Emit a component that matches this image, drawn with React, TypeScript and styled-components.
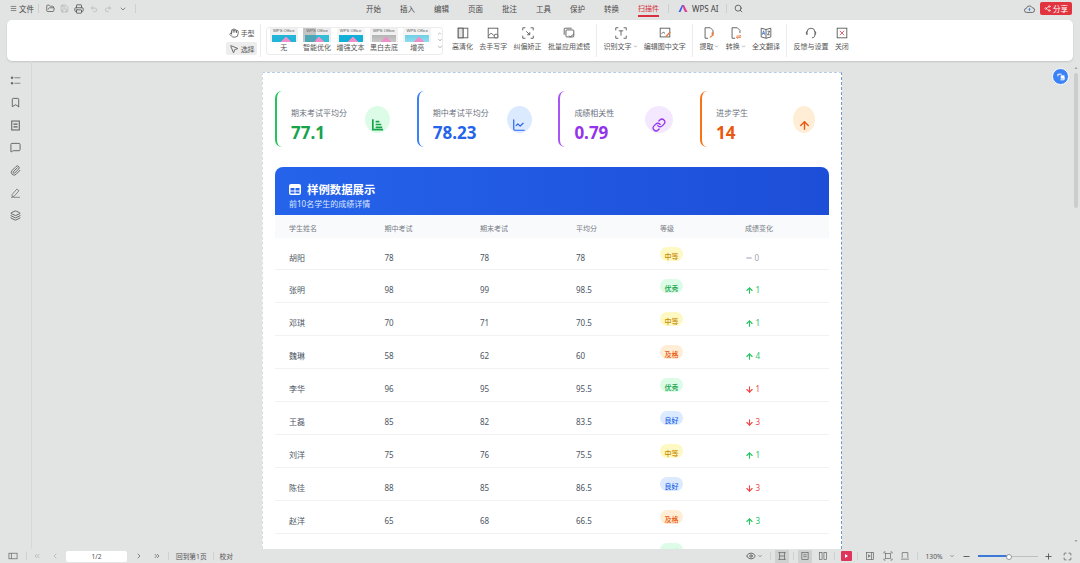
import { FC, ReactNode } from 'react'
import styled, { createGlobalStyle } from 'styled-components'
import {
    ArrowDown, ArrowUp, Bookmark, ChartLine, ChevronDown, ChevronLeft, ChevronRight, ChevronsLeft,
    ChevronsRight, Eye, FolderOpen, Hand, Layers, Link, Maximize, Menu, MessageSquare, Minus,
    MousePointer2, Paperclip, Plus, Printer, Redo2, Save, Search, Share2, Undo2,
} from 'lucide-react'

const GlobalStyle = createGlobalStyle`
    html, body { margin: 0; padding: 0; height: 100%; overflow: hidden; }
    body { font-family: "Noto Sans", "Noto Sans CJK SC", sans-serif; background: #e2e3e3; color: #4b4b4b; }
    #root { height: 100%; }
`

const Shell = styled.div`
    width: 1080px;
    height: 563px;
    display: flex;
    flex-direction: column;
    position: relative;
    overflow: hidden;
    background: #e2e3e3;
`

/* top bar */
const TopBar = styled.div`
    height: 20px;
    flex: none;
    box-sizing: border-box;
    padding-bottom: 3px;
    display: flex;
    align-items: center;
    font-size: 7.5px;
    color: #444;
    svg { display: block; }
`
const QuickGroup = styled.div`
    width: 366px;
    flex: none;
    display: flex;
    align-items: center;
    padding-left: 10px;
    box-sizing: border-box;
`
const FileLabel = styled.span`
    margin-left: 2px;
`
const QuickBtn = styled.span<{ $muted?: boolean }>`
    width: 14.5px;
    display: flex;
    justify-content: center;
    color: ${p => (p.$muted ? '#b4b4b4' : '#555')};
`
const TopSep = styled.i<{ $gap?: number }>`
    width: 1px;
    height: 9px;
    background: #cfcfcf;
    margin: 0 ${p => p.$gap ?? 5}px;
`
const Nav = styled.nav`
    display: flex;
    align-items: center;
    gap: 19px;
`
const NavItem = styled.span<{ $active?: boolean }>`
    position: relative;
    line-height: 12px;
    font-size: ${p => (p.$active ? '7px' : '7.5px')};
    color: ${p => (p.$active ? '#d8303c' : '#4a4a4a')};
    &::after {
        content: '';
        display: ${p => (p.$active ? 'block' : 'none')};
        position: absolute;
        left: 0;
        right: 0;
        bottom: -2px;
        height: 1.5px;
        background: #d8303c;
    }
`
const AiLabel = styled.span`
    display: flex;
    align-items: center;
    gap: 4px;
    font-size: 8px;
`
const TopRight = styled.div`
    margin-left: auto;
    display: flex;
    align-items: center;
    gap: 5px;
    padding-right: 8px;
    color: #555;
`
const ShareBtn = styled.button`
    width: 32px;
    height: 13px;
    border: 0;
    border-radius: 2px;
    background: #e2343f;
    color: #fff;
    padding: 0;
    font: inherit;
    font-size: 7.5px;
    display: flex;
    align-items: center;
    justify-content: center;
    gap: 2px;
`

/* ribbon */
const Ribbon = styled.div`
    height: 41px;
    flex: none;
    margin: 0 7px;
    padding-right: 5px;
    background: #fff;
    border-radius: 5px;
    box-shadow: 0 1px 2px rgba(0, 0, 0, 0.14);
    display: flex;
    align-items: center;
    justify-content: center;
    gap: 6.3px;
    font-size: 7px;
    color: #555;
`
const ToolStack = styled.div`
    display: flex;
    flex-direction: column;
    gap: 3px;
    margin-right: -3px;
`
const ToolBtn = styled.div<{ $active?: boolean }>`
    width: 31px;
    height: 13px;
    border-radius: 2px;
    display: flex;
    align-items: center;
    justify-content: center;
    gap: 2px;
    background: ${p => (p.$active ? '#ededed' : 'transparent')};
`
const RibbonSep = styled.i`
    width: 1px;
    height: 33px;
    background: #ececec;
    flex: none;
`
const FilterBox = styled.div`
    width: 177px;
    height: 28px;
    box-sizing: border-box;
    margin: 0 3px 0 -2px;
    padding: 0 0 0 3px;
    border: 1px solid #ececec;
    border-radius: 3px;
    display: flex;
    align-items: center;
    gap: 5.4px;
`
const Filter = styled.div`
    width: 28px;
    flex: none;
    text-align: center;
    white-space: nowrap;
    line-height: 10px;
    display: flex;
    flex-direction: column;
    align-items: center;
    gap: 1px;
`
const Thumb = styled.div<{ $band: string; $head: string; $shade?: boolean }>`
    width: 28px;
    height: 14px;
    position: relative;
    overflow: hidden;
    background: ${p => p.$head};
    font-size: 4.2px;
    line-height: 6px;
    color: #555;
    font-family: "Liberation Sans", sans-serif;
    &::before {
        content: '';
        position: absolute;
        left: 2px;
        right: 2px;
        bottom: 0;
        height: 7px;
        background:
            linear-gradient(to bottom right, transparent 50%, #ee8fc9 50%) 8px 100% / 6px 5px no-repeat,
            linear-gradient(to bottom left, transparent 50%, #ee8fc9 50%) 14px 100% / 6px 5px no-repeat,
            ${p => p.$band};
    }
    &::after {
        content: '';
        display: ${p => (p.$shade ? 'block' : 'none')};
        position: absolute;
        left: 0;
        top: 0;
        bottom: 0;
        width: 13px;
        background: rgba(120, 125, 125, 0.35);
    }
`
const FilterScroll = styled.div`
    margin-left: auto;
    width: 10px;
    display: flex;
    flex-direction: column;
    align-items: center;
    gap: 1px;
    color: #666;
`
const RibbonItem = styled.div`
    flex: none;
    display: flex;
    flex-direction: column;
    align-items: center;
    gap: 2.5px;
    white-space: nowrap;
    line-height: 9px;
    padding-bottom: 4px;
    svg { display: block; }
`
const Label = styled.span`
    display: flex;
    align-items: center;
    gap: 1px;
`

/* main */
const Main = styled.div`
    flex: 1;
    min-height: 0;
    display: flex;
`
const Sidebar = styled.aside`
    width: 31px;
    flex: none;
    border-right: 1px solid #d7d8d8;
    display: flex;
    flex-direction: column;
    align-items: center;
    padding: 13.5px 0 0;
    gap: 11.5px;
    color: #5f5f5f;
    box-sizing: content-box;
`
const Canvas = styled.main`
    flex: 1;
    min-width: 0;
    overflow: hidden;
    display: flex;
    justify-content: center;
    padding-top: 11px;
    position: relative;
`
const ScrollRail = styled.div`
    width: 8px;
    flex: none;
    display: flex;
    flex-direction: column;
    align-items: center;
    padding-top: 5px;
    color: #666;
`
const ScrollThumb = styled.div`
    width: 4px;
    height: 135px;
    margin-top: 3px;
    border-radius: 2px;
    background: #cbcccc;
`
const ScrollEnd = styled.div`
    margin-top: auto;
    padding-bottom: 1px;
`
const FloatBtn = styled.button`
    position: absolute;
    top: 7px;
    right: 3px;
    width: 17px;
    height: 17px;
    padding: 0;
    border: 1px solid #fff;
    border-radius: 50%;
    background: #3b82f6;
    color: #fff;
    display: flex;
    align-items: center;
    justify-content: center;
`
const Page = styled.section`
    width: 580px;
    flex: none;
    box-sizing: border-box;
    background: #fff;
    padding: 18px 12px 0 12px;
    border-top: 1px dashed #b6cbe8;
    border-right: 1px dashed #6f97cc;
    border-left: 1px dashed #d9dde2;
`

/* stat cards */
const Stats = styled.div`
    display: grid;
    grid-template-columns: repeat(4, 129px);
    gap: 12.7px;
`
const Stat = styled.div<{ $color: string }>`
    height: 56px;
    box-sizing: border-box;
    border-left: 2px solid ${p => p.$color};
    border-radius: 7px;
    padding: 0 14px 0 14px;
    display: flex;
    align-items: center;
    justify-content: space-between;
`
const StatText = styled.div`
    margin-top: 13px;
`
const StatLabel = styled.div`
    font-size: 8px;
    line-height: 12px;
    margin-bottom: 3px;
    color: #6b7280;
`
const StatValue = styled.div<{ $color: string }>`
    font-size: 17px;
    font-weight: 700;
    line-height: 22px;
    color: ${p => p.$color};
`
const StatIcon = styled.div<{ $bg: string; $color: string; $w: number }>`
    width: ${p => p.$w}px;
    height: 27px;
    border-radius: 50%;
    background: ${p => p.$bg};
    color: ${p => p.$color};
    display: flex;
    align-items: flex-end;
    justify-content: center;
    padding-bottom: 1px;
    box-sizing: border-box;
`

/* table */
const TablePanel = styled.div`
    margin-top: 20px;
`
const TableHead = styled.header`
    height: 48px;
    box-sizing: border-box;
    padding: 15px 14px 0;
    border-radius: 8px 8px 0 0;
    background: linear-gradient(90deg, #2563eb, #1d4ed8);
    color: #fff;
`
const TableTitle = styled.div`
    display: flex;
    align-items: center;
    gap: 6px;
    font-size: 11.4px;
    font-weight: 700;
    line-height: 15px;
`
const TableSub = styled.div`
    font-size: 8px;
    line-height: 11px;
    margin-top: 1px;
    color: #dbe6ff;
`
const Row = styled.div<{ $head?: boolean }>`
    display: grid;
    grid-template-columns: 95.5px 95.5px 96px 84px 85px 1fr;
    padding-left: 14px;
    padding-top: ${p => (p.$head ? '2px' : '0')};
    align-items: center;
    height: ${p => (p.$head ? '23px' : '33px')};
    box-sizing: border-box;
    font-size: ${p => (p.$head ? '7px' : '8px')};
    color: ${p => (p.$head ? '#777d87' : '#4b5563')};
    background: ${p => (p.$head ? '#f9fafb' : '#fff')};
    border-bottom: ${p => (p.$head ? '0' : '1px solid #f1f2f4')};
`
const FirstRow = styled(Row)`
    height: 32px;
`
const Cell = styled.div`
    padding-top: 7px;
`
const Badge = styled.span<{ $bg: string; $color: string }>`
    width: 23px;
    height: 14px;
    border-radius: 7px;
    background: ${p => p.$bg};
    color: ${p => p.$color};
    font-size: 7px;
    font-weight: 500;
    line-height: 8px;
    display: flex;
    align-items: flex-end;
    justify-content: center;
    box-sizing: border-box;
`
const Change = styled.div<{ $color: string }>`
    display: flex;
    align-items: center;
    gap: 1.5px;
    padding-top: 7px;
    font-size: 8px;
    color: ${p => p.$color};
    svg { margin-top: 2px; }
`

/* status bar */
const StatusBar = styled.footer`
    height: 14px;
    flex: none;
    display: flex;
    align-items: center;
    position: relative;
    z-index: 2;
    font-size: 6.7px;
    color: #555;
    background: #e2e3e3;
    padding-left: 8px;
    padding-right: 8px;
    svg { display: block; }
`
const StatusBtn = styled.span<{ $w?: number; $on?: boolean; $muted?: boolean }>`
    width: ${p => p.$w ?? 14}px;
    height: 13px;
    flex: none;
    display: flex;
    align-items: center;
    justify-content: center;
    background: ${p => (p.$on ? '#cfd0d0' : 'transparent')};
    border-radius: 1px;
    color: ${p => (p.$muted ? '#aaa' : '#555')};
`
const StatusSep = styled.i<{ $l?: number; $r?: number }>`
    width: 1px;
    height: 8px;
    flex: none;
    background: #cfd0d0;
    margin: 0 ${p => p.$r ?? 6}px 0 ${p => p.$l ?? 6}px;
`
const PageInput = styled.div`
    width: 61px;
    height: 11px;
    flex: none;
    background: #fff;
    border-radius: 2px;
    text-align: center;
    line-height: 11px;
    margin-right: 4px;
`
const StatusRight = styled.div`
    margin-left: auto;
    display: flex;
    align-items: center;
`
const EyeCaret = styled.span`
    margin: 0 0 0 1px;
    color: #555;
`
const ZoomText = styled.span`
    margin: 0 5px 0 0;
    width: 18px;
    white-space: nowrap;
`
const ZoomCaret = styled.span`
    margin-right: 7.5px;
`
const FullScreen = styled.span`
    margin-left: 10px;
`
const PlayBtn = styled.span`
    width: 11px;
    height: 10px;
    flex: none;
    border-radius: 1px;
    background: #e0355a;
    display: flex;
    align-items: center;
    justify-content: center;
    &::before {
        content: '';
        border-left: 3px solid #fff;
        border-top: 2px solid transparent;
        border-bottom: 2px solid transparent;
    }
`
const Slider = styled.div`
    width: 60px;
    height: 1px;
    flex: none;
    background: #bdbebe;
    position: relative;
    margin: 0 6.5px;
`
const SliderFill = styled.div`
    position: absolute;
    left: 0;
    top: -0.5px;
    height: 1.5px;
    width: 30px;
    background: #3b78d8;
`
const SliderKnob = styled.div`
    position: absolute;
    left: 28px;
    top: -2px;
    width: 4px;
    height: 4px;
    border-radius: 50%;
    background: #fff;
    border: 0.5px solid #999;
`

const Glyph: FC<{ size?: number; children: ReactNode }> = ({ size = 14, children }) => (
    <svg width={size} height={size} viewBox="0 0 16 16" fill="none" stroke="currentColor" strokeWidth="1">
        {children}
    </svg>
)

const ORANGE = '#e8743b'

const WpsMark = () => (
    <svg width="10" height="9" viewBox="0 0 10 9">
        <path d="M0.5 8 L4 1 L5.5 1 L2.5 8 Z" fill="#3b5bea" />
        <path d="M4.5 1 L6 1 L9.5 8 L7 8 L5.5 5 Z" fill="#e23f8e" />
    </svg>
)

const ribbonGroupA = [
    {
        label: '高清化',
        icon: <Glyph><rect x="2.5" y="2.5" width="11" height="11" /><path d="M8 2.5v11" /><rect x="2.5" y="2.5" width="5.5" height="11" fill="#e4e4e4" /></Glyph>,
    },
    {
        label: '去手写字',
        icon: <Glyph><rect x="2.5" y="2.5" width="11" height="11" /><path d="M3 11l3-3 3 3" /><circle cx="11.5" cy="11.5" r="2.2" fill="#fff" /></Glyph>,
    },
    {
        label: '纠偏矫正',
        icon: <Glyph><path d="M2 5V2h3M11 2h3v3M14 11v3h-3M5 14H2v-3" /><path d="M6 6l4 4M10 7v3H7" /></Glyph>,
    },
    {
        label: '批量应用滤镜',
        icon: <Glyph><rect x="4.5" y="4.5" width="9" height="8" rx="1" /><path d="M2.5 10V3.5a1 1 0 0 1 1-1H11M8 11l1.5 1.5 4-3.5" /></Glyph>,
    },
]

const ribbonGroupB = [
    {
        label: <Label>识别文字 <ChevronDown size={5} strokeWidth={2} /></Label>,
        icon: <Glyph><path d="M2 5V2h3M11 2h3v3M14 11v3h-3M5 14H2v-3" /><path d="M5.5 5.5h5M8 5.5v5.5" /></Glyph>,
    },
    {
        label: '编辑图中文字',
        icon: <Glyph><rect x="2.5" y="2.5" width="11" height="10" /><path d="M4 9l2-2 2 1.5" /><path d="M9 12l5-5" stroke={ORANGE} strokeWidth="1.6" /></Glyph>,
    },
]

const ribbonGroupC = [
    {
        label: <Label>提取 <ChevronDown size={5} strokeWidth={2} /></Label>,
        icon: <Glyph><path d="M3.5 14V2h6l3 3v3" /><path d="M3.5 14H7" /><path d="M9 13l4-3" stroke={ORANGE} strokeWidth="1.4" /><rect x="11" y="7.5" width="2.5" height="2.5" fill={ORANGE} stroke="none" /></Glyph>,
    },
    {
        label: <Label>转换 <ChevronDown size={5} strokeWidth={2} /></Label>,
        icon: <Glyph><path d="M3.5 14V2h6l3 3v3" /><path d="M3.5 14H7" /><path d="M8.5 11.5h5l-1.5-1.5M13.5 13h-5l1.5 1.5" stroke={ORANGE} /></Glyph>,
    },
    {
        label: '全文翻译',
        icon: <Glyph><path d="M8 4L2.5 2.5v10L8 14l5.5-1.5v-10z" /><path d="M8 4v10" /><path d="M3.8 10l1.4-4.5L6.6 10M4.4 8.5h1.6" stroke="#3b78d8" /><path d="M9.8 6h2.4l-2.4 4h2.4" /></Glyph>,
    },
]

const ribbonGroupD = [
    {
        label: '反馈与设置',
        icon: <Glyph><path d="M3.5 10V7a4.5 4.5 0 0 1 9 0v3" /><path d="M12.5 6c1.2.5 1.2 3.5 0 4M3.5 6c-1.2.5-1.2 3.5 0 4M12.5 10c0 2.5-1.5 3.5-3.5 3.5" /></Glyph>,
    },
    {
        label: '关闭',
        icon: <Glyph><rect x="2.5" y="2.5" width="11" height="11" /><path d="M5.5 5.5l5 5M10.5 5.5l-5 5" stroke="#e2505c" /></Glyph>,
    },
]

const filters = [
    { name: '无', band: 'linear-gradient(#23b5d8, #23b5d8)', head: '#f0f0f0' },
    { name: '智能优化', band: 'linear-gradient(#35bcd6, #35bcd6)', head: '#ececec', shade: true },
    { name: '增强文本', band: 'linear-gradient(#12b0d6, #12b0d6)', head: '#f6f6f6' },
    { name: '黑白去底', band: 'linear-gradient(#b5b5b5, #c9c9c9)', head: '#f0f0f0' },
    { name: '增亮', band: 'linear-gradient(#6fd0e6, #8fdcec)', head: '#f4f4f4' },
]

const stats = [
    {
        label: '期末考试平均分', value: '77.1', line: '#22c55e', text: '#16a34a', bg: '#dcfce7', w: 25,
        icon: <Glyph size={15}><path d="M3 2.5V13.5H14" strokeWidth="1.8" /><path d="M6 5h4M6 8h6M6 11h7" strokeWidth="1.8" /></Glyph>,
    },
    { label: '期中考试平均分', value: '78.23', line: '#3b82f6', text: '#2563eb', bg: '#dbeafe', w: 25, icon: <ChartLine size={14} strokeWidth={2} /> },
    { label: '成绩相关性', value: '0.79', line: '#a855f7', text: '#9333ea', bg: '#f3e8ff', w: 28, icon: <Link size={14} strokeWidth={2.2} /> },
    { label: '进步学生', value: '14', line: '#f97316', text: '#ea580c', bg: '#ffedd5', w: 22, icon: <ArrowUp size={13} strokeWidth={2.6} /> },
]

const grades = {
    中等: { bg: '#fef9c3', color: '#ca8a04' },
    优秀: { bg: '#dcfce7', color: '#16a34a' },
    及格: { bg: '#ffedd5', color: '#ea580c' },
    良好: { bg: '#dbeafe', color: '#2563eb' },
}

type Grade = keyof typeof grades

const students: { name: string; mid: number; end: number; avg: number; grade: Grade; diff: number }[] = [
    { name: '胡阳', mid: 78, end: 78, avg: 78, grade: '中等', diff: 0 },
    { name: '张明', mid: 98, end: 99, avg: 98.5, grade: '优秀', diff: 1 },
    { name: '邓琪', mid: 70, end: 71, avg: 70.5, grade: '中等', diff: 1 },
    { name: '魏琳', mid: 58, end: 62, avg: 60, grade: '及格', diff: 4 },
    { name: '李华', mid: 96, end: 95, avg: 95.5, grade: '优秀', diff: -1 },
    { name: '王磊', mid: 85, end: 82, avg: 83.5, grade: '良好', diff: -3 },
    { name: '刘洋', mid: 75, end: 76, avg: 75.5, grade: '中等', diff: 1 },
    { name: '陈佳', mid: 88, end: 85, avg: 86.5, grade: '良好', diff: -3 },
    { name: '赵洋', mid: 65, end: 68, avg: 66.5, grade: '及格', diff: 3 },
]

const StudentChange: FC<{ diff: number }> = ({ diff }) => {
    if (diff === 0) {
        return <Change $color="#9ca3af"><Minus size={8} strokeWidth={3} /> 0</Change>
    }
    if (diff > 0) {
        return <Change $color="#22c55e"><ArrowUp size={9} strokeWidth={3} /> {diff}</Change>
    }
    return <Change $color="#ef4444"><ArrowDown size={9} strokeWidth={3} /> {-diff}</Change>
}

const App: FC = () => {
    return (
        <Shell>
            <GlobalStyle />
            <TopBar>
                <QuickGroup>
                    <Menu size={7} />
                    <FileLabel>文件</FileLabel>
                    <TopSep $gap={4} />
                    <QuickBtn><FolderOpen size={9} /></QuickBtn>
                    <QuickBtn $muted><Save size={9} /></QuickBtn>
                    <QuickBtn><Printer size={10} /></QuickBtn>
                    <QuickBtn $muted><Undo2 size={8} /></QuickBtn>
                    <QuickBtn $muted><Redo2 size={8} /></QuickBtn>
                    <QuickBtn><ChevronDown size={8} /></QuickBtn>
                    <TopSep $gap={5} />
                </QuickGroup>
                <Nav>
                    <NavItem>开始</NavItem>
                    <NavItem>插入</NavItem>
                    <NavItem>编辑</NavItem>
                    <NavItem>页面</NavItem>
                    <NavItem>批注</NavItem>
                    <NavItem>工具</NavItem>
                    <NavItem>保护</NavItem>
                    <NavItem>转换</NavItem>
                    <NavItem $active>扫描件</NavItem>
                </Nav>
                <TopSep $gap={9} />
                <AiLabel><WpsMark />WPS AI</AiLabel>
                <TopSep $gap={7} />
                <Search size={9} />
                <TopRight>
                    <svg width="11" height="10" viewBox="0 0 16 14" fill="none" stroke="currentColor" strokeWidth="1.2">
                        <path d="M4 12a3 3 0 0 1-.5-6A4.5 4.5 0 0 1 12 5.2 3.4 3.4 0 0 1 12 12z" />
                        <path d="M8 10V6M6.3 7.7 8 6l1.7 1.7" stroke="#3b78d8" />
                    </svg>
                    <ShareBtn><Share2 size={7} />分享</ShareBtn>
                </TopRight>
            </TopBar>

            <Ribbon>
                <ToolStack>
                    <ToolBtn><Hand size={10} />手型</ToolBtn>
                    <ToolBtn $active><MousePointer2 size={10} />选择</ToolBtn>
                </ToolStack>
                <RibbonSep />
                <FilterBox>
                    {filters.map(f => (
                        <Filter key={f.name}>
                            <Thumb $band={f.band} $head={f.head} $shade={f.shade}>WPS Office</Thumb>
                            {f.name}
                        </Filter>
                    ))}
                    <FilterScroll>
                        <ChevronDown size={5} style={{ transform: 'rotate(180deg)' }} />
                        <ChevronDown size={6} strokeWidth={2} />
                        <ChevronDown size={6} strokeWidth={2} />
                    </FilterScroll>
                </FilterBox>
                {ribbonGroupA.map(i => <RibbonItem key={i.label}>{i.icon}{i.label}</RibbonItem>)}
                <RibbonSep />
                {ribbonGroupB.map((i, n) => <RibbonItem key={n}>{i.icon}{i.label}</RibbonItem>)}
                <RibbonSep />
                {ribbonGroupC.map((i, n) => <RibbonItem key={n}>{i.icon}{i.label}</RibbonItem>)}
                <RibbonSep />
                {ribbonGroupD.map(i => <RibbonItem key={i.label}>{i.icon}{i.label}</RibbonItem>)}
            </Ribbon>

            <Main>
                <Sidebar>
                    <Glyph size={11}><circle cx="3" cy="4" r="1.3" fill="currentColor" /><circle cx="3" cy="12" r="1.3" fill="currentColor" /><path d="M6.5 4H15M6.5 12H15" /></Glyph>
                    <Bookmark size={11} />
                    <Glyph size={11}><rect x="2.5" y="1.5" width="11" height="13" strokeWidth="1.5" /><path d="M5 6h6M5 10h6" strokeWidth="1.8" /></Glyph>
                    <MessageSquare size={11} />
                    <Paperclip size={11} />
                    <Glyph size={11}><path d="M3 11l7-8 3 2.5-7 8H3z" /><path d="M1.5 15h13" /></Glyph>
                    <Layers size={11} />
                </Sidebar>
                <Canvas>
                    <Page>
                        <Stats>
                            {stats.map(s => (
                                <Stat key={s.label} $color={s.line}>
                                    <StatText>
                                        <StatLabel>{s.label}</StatLabel>
                                        <StatValue $color={s.text}>{s.value}</StatValue>
                                    </StatText>
                                    <StatIcon $bg={s.bg} $color={s.text} $w={s.w}>{s.icon}</StatIcon>
                                </Stat>
                            ))}
                        </Stats>
                        <TablePanel>
                            <TableHead>
                                <TableTitle>
                                    <svg width="12" height="11" viewBox="0 0 12 11">
                                        <rect width="12" height="11" rx="2" fill="#fff" />
                                        <path d="M1.5 4h4v2.5h-4zM6.5 4h4v2.5h-4zM1.5 7.5h4v2h-4zM6.5 7.5h4v2h-4z" fill="#2563eb" />
                                    </svg>
                                    样例数据展示
                                </TableTitle>
                                <TableSub>前10名学生的成绩详情</TableSub>
                            </TableHead>
                            <Row $head>
                                <div>学生姓名</div>
                                <div>期中考试</div>
                                <div>期末考试</div>
                                <div>平均分</div>
                                <div>等级</div>
                                <div>成绩变化</div>
                            </Row>
                            {students.map((s, n) => {
                                const RowKind = n === 0 ? FirstRow : Row
                                return (
                                    <RowKind key={s.name}>
                                        <Cell>{s.name}</Cell>
                                        <Cell>{s.mid}</Cell>
                                        <Cell>{s.end}</Cell>
                                        <Cell>{s.avg}</Cell>
                                        <Badge $bg={grades[s.grade].bg} $color={grades[s.grade].color}>{s.grade}</Badge>
                                        <StudentChange diff={s.diff} />
                                    </RowKind>
                                )
                            })}
                            <Row>
                                <Cell />
                                <Cell />
                                <Cell />
                                <Cell />
                                <Badge $bg={grades.优秀.bg} $color={grades.优秀.color}>优秀</Badge>
                                <Cell />
                            </Row>
                        </TablePanel>
                    </Page>
                    <FloatBtn aria-label="assistant">
                        <Glyph size={10}><path d="M3 7V3.5h6M13 9v3.5H7" strokeWidth="1.6" /><rect x="8" y="6" width="5" height="4" fill="currentColor" /></Glyph>
                    </FloatBtn>
                </Canvas>
                <ScrollRail>
                    <ChevronDown size={4} fill="currentColor" style={{ transform: 'rotate(180deg)' }} />
                    <ScrollThumb />
                    <ScrollEnd><ChevronDown size={4} fill="currentColor" /></ScrollEnd>
                </ScrollRail>
            </Main>

            <StatusBar>
                <Glyph size={10}><rect x="1.5" y="3.5" width="13" height="9" /><path d="M5.5 3.5v9" /></Glyph>
                <StatusSep $l={8} $r={3} />
                <StatusBtn $muted><ChevronsLeft size={8} /></StatusBtn>
                <StatusBtn $muted $w={22}><ChevronLeft size={8} /></StatusBtn>
                <PageInput>1/2</PageInput>
                <StatusBtn $w={16}><ChevronRight size={8} /></StatusBtn>
                <StatusBtn $w={20}><ChevronsRight size={8} /></StatusBtn>
                <StatusSep $l={1} $r={7} />
                <span>回到第1页</span>
                <StatusSep />
                <span>校对</span>
                <StatusRight>
                    <Eye size={10} />
                    <EyeCaret><ChevronDown size={6} /></EyeCaret>
                    <StatusSep $l={7} $r={4} />
                    <StatusBtn $on><Glyph size={10}><path d="M2 2.5h12M2 13.5h12M4 2.5v11M12 2.5v11M4 8h8" /></Glyph></StatusBtn>
                    <StatusSep $l={4} $r={4} />
                    <StatusBtn $on><Glyph size={10}><rect x="3" y="2.5" width="10" height="11" /><path d="M5.5 6h5M5.5 9h5" /></Glyph></StatusBtn>
                    <StatusBtn $w={22}><Glyph size={10}><rect x="2.5" y="2.5" width="4" height="11" /><rect x="9.5" y="2.5" width="4" height="11" /></Glyph></StatusBtn>
                    <StatusSep $l={0} $r={6} />
                    <PlayBtn />
                    <StatusSep $l={5} $r={3} />
                    <StatusBtn $w={18}><Glyph size={10}><rect x="2.5" y="2.5" width="11" height="11" /><path d="M10.5 2.5v11M5.5 6l3 2-3 2z" /></Glyph></StatusBtn>
                    <StatusBtn $w={18}><Glyph size={10}><path d="M1.5 4V1.5H4M12 1.5h2.5V4M14.5 12v2.5H12M4 14.5H1.5V12" /><rect x="4" y="4" width="8" height="8" /></Glyph></StatusBtn>
                    <StatusBtn $w={16}><Glyph size={10}><path d="M3.5 11V2.5h9V11M1.5 13h13" /></Glyph></StatusBtn>
                    <StatusSep $l={4} $r={8} />
                    <ZoomText>130%</ZoomText>
                    <ZoomCaret><ChevronDown size={6} /></ZoomCaret>
                    <Minus size={9} strokeWidth={2.4} />
                    <Slider><SliderFill /><SliderKnob /></Slider>
                    <Plus size={9} strokeWidth={2.4} />
                    <FullScreen><Maximize size={9} /></FullScreen>
                </StatusRight>
            </StatusBar>
        </Shell>
    )
}

export default App
